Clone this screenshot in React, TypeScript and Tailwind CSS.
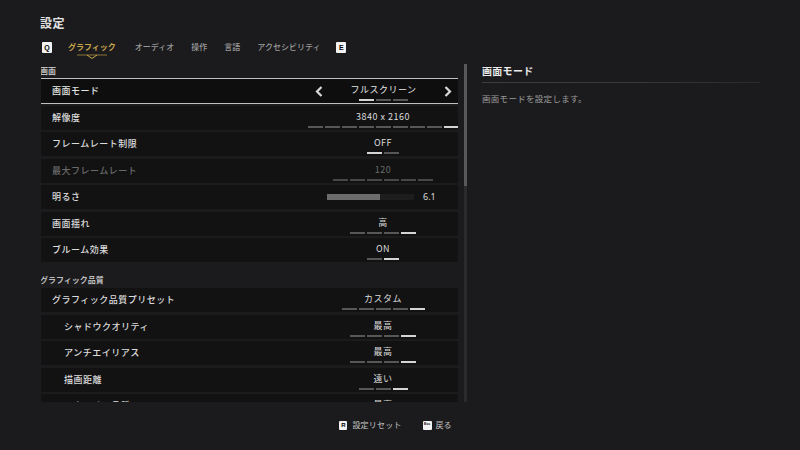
import React from "react";

const FONT = { fontFamily: '"Noto Sans CJK JP", "Noto Sans", sans-serif' };

function Segs({ n, active, dim }: { n: number; active: number; dim?: boolean }) {
  const items = [];
  for (let i = 0; i < n; i++) {
    const on = i === active;
    items.push(
      <div
        key={i}
        className={
          "w-[15px] h-[2px] " +
          (on ? "bg-[#d4d4d4]" : dim ? "bg-[#474747]" : "bg-[#575757]")
        }
      />
    );
  }
  return <div className="flex gap-[2px] mt-[4px]">{items}</div>;
}

function KeyBox({ k, w = 10, h = 11, size = 7 }: { k: string; w?: number; h?: number; size?: number }) {
  return (
    <div
      className="bg-[#f2f2f2] rounded-[1px] flex items-center justify-center text-black font-bold leading-none"
      style={{ width: w, height: h, fontSize: size, fontFamily: '"Liberation Sans", sans-serif' }}
    >
      {k}
    </div>
  );
}

type RowProps = {
  label: string;
  value: string;
  n: number;
  active: number;
  indent?: boolean;
  disabled?: boolean;
};

function Row({ label, value, n, active, indent, disabled }: RowProps) {
  return (
    <div className="h-[24px] mb-[2.5px] bg-[#121213] flex shrink-0">
      <div
        className={
          "flex-1 flex items-center text-[9px] leading-[10px] font-medium tracking-[0.5px] " +
          (indent ? "pl-[23px] " : "pl-[11px] ") +
          (disabled ? "text-[#6a6a6a]" : "text-[#dcdcdc]")
        }
      >
        {label}
      </div>
      <div className="w-[150px] flex flex-col items-center pt-[6px]">
        <div
          className={
            "text-[9px] leading-[10px] tracking-[0.5px] " +
            (disabled ? "text-[#6a6a6a]" : "text-[#dcdcdc]")
          }
        >
          {value}
        </div>
        <Segs n={n} active={active} dim={disabled} />
      </div>
    </div>
  );
}

function Chevron({ dir }: { dir: "l" | "r" }) {
  return (
    <svg width="8" height="11" viewBox="0 0 8 11">
      {dir === "l" ? (
        <polyline points="6.5,1 2,5.5 6.5,10" fill="none" stroke="#d8d8d8" strokeWidth="2.2" />
      ) : (
        <polyline points="1.5,1 6,5.5 1.5,10" fill="none" stroke="#d8d8d8" strokeWidth="2.2" />
      )}
    </svg>
  );
}

export default function App() {
  return (
    <div className="w-[800px] h-[450px] bg-[#1b1b1d] overflow-hidden" style={FONT}>
      {/* header */}
      <div className="h-[64px] pl-[40px] pt-[16px]">
        <div className="text-[12px] leading-[13px] font-bold text-[#e2e2e2] tracking-[0.5px]">設定</div>
        <div className="mt-[12px] h-[12px] flex items-center">
          <div className="ml-[2px]">
            <KeyBox k="Q" />
          </div>
          <div className="ml-[16px] relative text-[8px] leading-[10px] font-bold text-[#c9a54e]">
            グラフィック
            <svg
              className="absolute left-1/2 -translate-x-1/2 top-[12px]"
              width="30"
              height="5"
              viewBox="0 0 30 5"
            >
              <line x1="0" y1="1" x2="30" y2="1" stroke="#a88a3e" strokeWidth="0.8" />
              <polyline points="10,1 15,4.5 20,1" fill="none" stroke="#c9a54e" strokeWidth="1" />
            </svg>
          </div>
          <div className="ml-[19px] text-[8px] leading-[10px] font-medium text-[#9a9a9a]">オーディオ</div>
          <div className="ml-[17px] text-[8px] leading-[10px] font-medium text-[#9a9a9a]">操作</div>
          <div className="ml-[17px] text-[8px] leading-[10px] font-medium text-[#9a9a9a]">言語</div>
          <div className="ml-[17px] text-[8px] leading-[10px] font-medium text-[#9a9a9a]">アクセシビリティ</div>
          <div className="ml-[16px]">
            <KeyBox k="E" />
          </div>
        </div>
      </div>

      {/* main */}
      <div className="flex h-[338px]">
        <div className="ml-[41px] w-[417px] h-[338px] overflow-hidden flex flex-col">
          <div className="h-[15px] shrink-0 pt-[2px] -ml-[1px] text-[8px] leading-[9px] font-bold text-[#bdbdbd]">画面</div>

          {/* selected row */}
          <div className="h-[24px] mb-[2.5px] bg-[#0e0e0f] flex shrink-0 outline outline-1 outline-[#bfbfbf]">
            <div className="flex-1 flex items-center pl-[11px] text-[9px] leading-[10px] font-medium tracking-[0.5px] text-[#e6e6e6]">
              画面モード
            </div>
            <div className="w-[150px] flex items-center pl-[7px] pr-[6px]">
              <Chevron dir="l" />
              <div className="flex-1 flex flex-col items-center pt-[6px] self-stretch">
                <div className="text-[9px] leading-[10px] tracking-[0.5px] text-[#e6e6e6]">フルスクリーン</div>
                <Segs n={3} active={0} />
              </div>
              <Chevron dir="r" />
            </div>
          </div>

          <Row label="解像度" value="3840 x 2160" n={9} active={8} />
          <Row label="フレームレート制限" value="OFF" n={2} active={0} />
          <Row label="最大フレームレート" value="120" n={6} active={-1} disabled />

          {/* brightness */}
          <div className="h-[24px] mb-[2.5px] bg-[#121213] flex shrink-0">
            <div className="flex-1 flex items-center pl-[11px] text-[9px] leading-[10px] font-medium tracking-[0.5px] text-[#dcdcdc]">
              明るさ
            </div>
            <div className="w-[150px] flex items-center pl-[19px]">
              <div className="w-[87px] h-[6px] bg-[#1d1d1e] flex">
                <div className="w-[53px] h-[6px] bg-[#6c6c6c]" />
              </div>
              <div className="ml-[9px] text-[9px] leading-[10px] text-[#dcdcdc]" style={{ fontFamily: '"Noto Sans", sans-serif' }}>
                6.1
              </div>
            </div>
          </div>

          <Row label="画面揺れ" value="高" n={4} active={3} />
          <Row label="ブルーム効果" value="ON" n={2} active={1} />

          <div className="h-[23.5px] shrink-0 pt-[10px] -ml-[1px] text-[8px] leading-[9px] font-bold text-[#bdbdbd]">
            グラフィック品質
          </div>

          <Row label="グラフィック品質プリセット" value="カスタム" n={5} active={4} />
          <Row label="シャドウクオリティ" value="最高" n={4} active={3} indent />
          <Row label="アンチエイリアス" value="最高" n={4} active={3} indent />
          <Row label="描画距離" value="遠い" n={3} active={2} indent />
          <Row label="テクスチャ品質" value="最高" n={4} active={3} indent />
        </div>

        {/* scrollbar */}
        <div className="ml-[6px] w-[3px] h-[338px] bg-[#2b2b2c] flex flex-col">
          <div className="h-[122px] bg-[#58585a]" />
        </div>

        {/* right panel */}
        <div className="ml-[15px] w-[280px] pt-[1px]">
          <div className="text-[10px] leading-[12px] font-bold text-[#ececec] tracking-[0.3px]">画面モード</div>
          <div className="mt-[5px] h-[1px] w-[278px] bg-gradient-to-r from-[#3e3e3e] via-[#3a3a3a] to-[#2a2a2a]" />
          <div className="mt-[10px] text-[8.5px] leading-[10px] text-[#9c9c9c] tracking-[0.3px]">
            画面モードを設定します。
          </div>
        </div>
      </div>

      {/* footer */}
      <div className="mt-[18px] h-[10px] flex items-center justify-center pr-[9px]">
        <KeyBox k="R" w={8} h={9} size={6} />
        <div className="ml-[5px] text-[8px] leading-[10px] text-[#c4c4c4] tracking-[0.2px]">設定リセット</div>
        <div className="ml-[21px]">
          <KeyBox k="Esc" w={9} h={9} size={3.5} />
        </div>
        <div className="ml-[4px] text-[8px] leading-[10px] text-[#c4c4c4]">戻る</div>
      </div>
    </div>
  );
}
